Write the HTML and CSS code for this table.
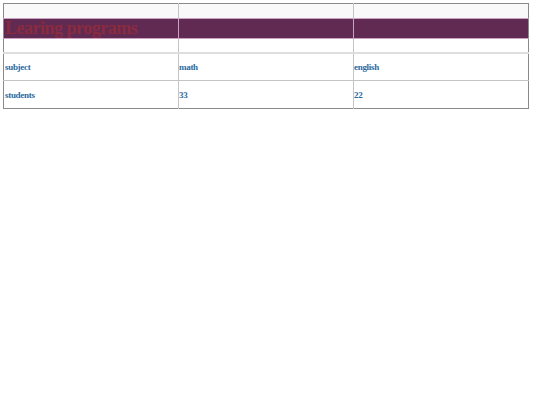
FILE: index.html
```html
<!DOCTYPE html>
<html>
<head>
<meta charset="utf-8">
<link rel="stylesheet" href="styles.css">
</head>
<body>
<table class="grid">
  <tr class="blank top"><td></td><td></td><td></td></tr>
  <tr class="title"><td class="heading">Learing programs</td><td></td><td></td></tr>
  <tr class="blank"><td></td><td></td><td></td></tr>
  <tr class="data"><td>subject</td><td>math</td><td>english</td></tr>
  <tr class="data last"><td>students</td><td>33</td><td>22</td></tr>
</table>
</body>
</html>
```
FILE: styles.css
```css
html, body {
  margin: 0;
  padding: 0;
  background: #fff;
}
body {
  padding: 3px;
  font-family: "Liberation Serif", serif;
}
.grid {
  width: 526px;
  border-collapse: collapse;
  border: 1px solid #8a8a8a;
  table-layout: fixed;
}
.grid td {
  padding: 0 1px 0 0;
  border-right: 1px solid #c4c4c4;
  vertical-align: middle;
}
.grid td:first-child {
  padding-left: 1px;
}
.grid td:last-child {
  border-right: none;
}
.blank td {
  height: 13px;
}
.top td {
  height: 14px;
  background: #f9f9f9;
}
.title td {
  height: 19px;
  background: #612a52;
  border-top: 1px solid #c9a3c1;
  border-bottom: 1px solid #c9a3c1;
  border-right: 1px solid #c9a3c1;
}
.heading {
  color: #8a2b40;
  font-weight: bold;
  font-size: 18px;
  line-height: 19px;
  letter-spacing: -0.5px;
  white-space: nowrap;
}
.blank:not(.top) td {
  border-bottom: 2px solid #dedede;
}
.data td {
  height: 26px;
  color: #2c6a9e;
  font-weight: bold;
  font-size: 9px;
  letter-spacing: -0.3px;
  border-bottom: 1px solid #c4c4c4;
}
.data.last td {
  height: 27px;
  border-bottom: none;
}
```
